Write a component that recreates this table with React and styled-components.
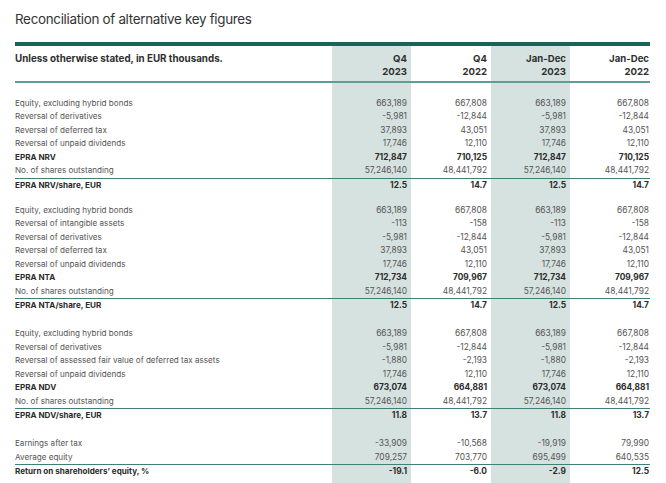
import React from 'react';
import styled, { createGlobalStyle } from 'styled-components';

const GlobalStyle = createGlobalStyle`
  html, body {
    margin: 0;
    padding: 0;
    background: #ffffff;
  }
  body {
    font-family: Inter, "Liberation Sans", sans-serif;
    -webkit-font-smoothing: antialiased;
  }
`;

const Page = styled.div`
  width: 666px;
  height: 483px;
  overflow: hidden;
  padding-left: 15px;
  box-sizing: border-box;
`;

const Title = styled.h1`
  margin: 0;
  padding-top: 10px;
  height: 32px;
  font-size: 13.4px;
  line-height: 18px;
  font-weight: 400;
  letter-spacing: -0.3px;
  color: #333333;
`;

const Table = styled.table`
  width: 635px;
  border-collapse: collapse;
  table-layout: fixed;
  font-size: 8.4px;
`;

const HeadCell = styled.th`
  border-top: 4px solid #17645b;
  border-bottom: 2px solid #5c9e94;
  padding: 7px ${p => (p.$last ? '1px' : '4px')} 3px 0;
  height: 25px;
  vertical-align: top;
  text-align: ${p => (p.$label ? 'left' : 'right')};
  font-size: ${p => (p.$label ? '9.8px' : '9.6px')};
  line-height: 12.5px;
  font-weight: 700;
  color: #2f2f2f;
  background: ${p => (p.$shaded ? '#d6e2e0' : 'transparent')};
`;

const Row = styled.tr`
  height: 13.5px;
  border-bottom: ${p => (p.$line ? '1.5px solid #3f7f77' : 'none')};
`;

const Spacer = styled.tr`
  height: ${p => p.$h}px;
`;

const Cell = styled.td`
  padding: 0 ${p => (p.$last ? '1px' : '4px')} 0 0;
  line-height: 13.5px;
  white-space: nowrap;
  text-align: ${p => (p.$label ? 'left' : 'right')};
  font-size: ${p => (p.$label ? '8.1px' : '8.4px')};
  font-weight: ${p => (p.$bold ? 700 : 400)};
  color: ${p => (p.$bold ? '#2b2b2b' : '#555555')};
  background: ${p => (p.$shaded ? '#d6e2e0' : 'transparent')};
`;

const blocks = [
  {
    gap: 14.5,
    rows: [
      ['Equity, excluding hybrid bonds', '663,189', '667,808', '663,189', '667,808'],
      ['Reversal of derivatives', '-5,981', '-12,844', '-5,981', '-12,844'],
      ['Reversal of deferred tax', '37,893', '43,051', '37,893', '43,051'],
      ['Reversal of unpaid dividends', '17,746', '12,110', '17,746', '12,110'],
      ['EPRA NRV', '712,847', '710,125', '712,847', '710,125', 'bold'],
      ['No. of shares outstanding', '57,246,140', '48,441,792', '57,246,140', '48,441,792', 'line'],
      ['EPRA NRV/share, EUR', '12.5', '14.7', '12.5', '14.7', 'bold'],
    ],
  },
  {
    gap: 11.5,
    rows: [
      ['Equity, excluding hybrid bonds', '663,189', '667,808', '663,189', '667,808'],
      ['Reversal of intangible assets', '-113', '-158', '-113', '-158'],
      ['Reversal of derivatives', '-5,981', '-12,844', '-5,981', '-12,844'],
      ['Reversal of deferred tax', '37,893', '43,051', '37,893', '43,051'],
      ['Reversal of unpaid dividends', '17,746', '12,110', '17,746', '12,110'],
      ['EPRA NTA', '712,734', '709,967', '712,734', '709,967', 'bold'],
      ['No. of shares outstanding', '57,246,140', '48,441,792', '57,246,140', '48,441,792', 'line'],
      ['EPRA NTA/share, EUR', '12.5', '14.7', '12.5', '14.7', 'bold'],
    ],
  },
  {
    gap: 14.5,
    rows: [
      ['Equity, excluding hybrid bonds', '663,189', '667,808', '663,189', '667,808'],
      ['Reversal of derivatives', '-5,981', '-12,844', '-5,981', '-12,844'],
      ['Reversal of assessed fair value of deferred tax assets', '-1,880', '-2,193', '-1,880', '-2,193'],
      ['Reversal of unpaid dividends', '17,746', '12,110', '17,746', '12,110'],
      ['EPRA NDV', '673,074', '664,881', '673,074', '664,881', 'bold'],
      ['No. of shares outstanding', '57,246,140', '48,441,792', '57,246,140', '48,441,792', 'line'],
      ['EPRA NDV/share, EUR', '11.8', '13.7', '11.8', '13.7', 'bold'],
    ],
  },
  {
    gap: 14.5,
    rows: [
      ['Earnings after tax', '-33,909', '-10,568', '-19,919', '79,990'],
      ['Average equity', '709,257', '703,770', '695,499', '640,535', 'line'],
      ['Return on shareholders\u2019 equity, %', '-19.1', '-6.0', '-2.9', '12.5', 'bold'],
    ],
  },
];

const heads = [
  ['Q4', '2023'],
  ['Q4', '2022'],
  ['Jan-Dec', '2023'],
  ['Jan-Dec', '2022'],
];

const GapRow = ({ h }) => (
  <Spacer $h={h}>
    <Cell $label />
    <Cell $shaded />
    <Cell />
    <Cell $shaded />
    <Cell $last />
  </Spacer>
);

const App = () => (
  <Page>
    <GlobalStyle />
    <Title>Reconciliation of alternative key figures</Title>
    <Table>
      <colgroup>
        <col style={{ width: 317 }} />
        <col style={{ width: 79 }} />
        <col style={{ width: 80 }} />
        <col style={{ width: 79 }} />
        <col style={{ width: 80 }} />
      </colgroup>
      <thead>
        <tr>
          <HeadCell $label>Unless otherwise stated, in EUR thousands.</HeadCell>
          {heads.map(([a, b], i) => (
            <HeadCell key={i} $shaded={i % 2 === 0} $last={i === 3}>
              {a}
              <br />
              {b}
            </HeadCell>
          ))}
        </tr>
      </thead>
      <tbody>
        {blocks.map((block, bi) => (
          <React.Fragment key={bi}>
            <GapRow h={block.gap} />
            {block.rows.map((r, ri) => {
              const bold = r[5] === 'bold';
              return (
                <Row key={ri} $line={r[5] === 'line'}>
                  <Cell $label $bold={bold}>{r[0]}</Cell>
                  {r.slice(1, 5).map((v, vi) => (
                    <Cell key={vi} $bold={bold} $shaded={vi % 2 === 0} $last={vi === 3}>
                      {v}
                    </Cell>
                  ))}
                </Row>
              );
            })}
          </React.Fragment>
        ))}
        <GapRow h={20} />
      </tbody>
    </Table>
  </Page>
);

export default App;
